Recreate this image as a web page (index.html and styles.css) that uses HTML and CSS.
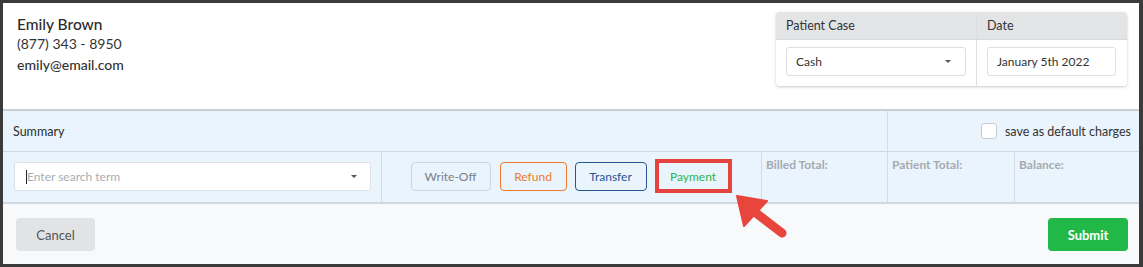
FILE: index.html
```html
<!DOCTYPE html>
<html>
<head>
<meta charset="utf-8">
<link rel="stylesheet" href="styles.css">
</head>
<body>
<div class="frame">
  <div class="top">
    <div class="contact">
      <div class="name">Emily Brown</div>
      <div class="phone">(877) 343 - 8950</div>
      <div class="email">emily@email.com</div>
    </div>
    <div class="case-card">
      <div class="case-head">
        <div class="cc-col1">Patient Case</div>
        <div class="cc-col2">Date</div>
      </div>
      <div class="case-body">
        <div class="cc-col1"><div class="select">Cash<span class="caret"></span></div></div>
        <div class="cc-col2"><div class="date-input">January 5th 2022</div></div>
      </div>
    </div>
  </div>
  <div class="sum-head">
    <div class="sum-title">Summary</div>
    <div class="sum-opt"><span class="checkbox"></span><span>save as default charges</span></div>
  </div>
  <div class="sum-row">
    <div class="cell search-cell">
      <div class="search"><span class="cursor"></span><span class="ph">Enter search term</span><span class="caret"></span></div>
    </div>
    <div class="cell btn-cell">
      <span class="btn btn-write">Write-Off</span>
      <span class="btn btn-refund">Refund</span>
      <span class="btn btn-transfer">Transfer</span>
      <span class="btn btn-pay">Payment</span>
    </div>
    <div class="cell total t1">Billed Total:</div>
    <div class="cell total t2">Patient Total:</div>
    <div class="cell total t3">Balance:</div>
  </div>
  <div class="footer">
    <span class="fbtn cancel">Cancel</span>
    <span class="fbtn submit">Submit</span>
  </div>
  <svg class="arrow" width="1143" height="267" viewBox="0 0 1143 267">
    <line x1="782" y1="233" x2="752" y2="210" stroke="#e8453d" stroke-width="9" stroke-linecap="round"/>
    <polygon points="737,196 767,201 744,226" fill="#e8453d" stroke="#e8453d" stroke-width="2" stroke-linejoin="round"/>
  </svg>
</div>
</body>
</html>
```
FILE: styles.css
```css
* { box-sizing: border-box; }
body { margin: 0; font-family: Lato, "Open Sans", sans-serif; color: #333; }
.frame {
  position: relative;
  width: 1143px; height: 267px;
  border: 3px solid #3b3b3b; border-right-width: 4px;
  background: #fff;
  display: flex; flex-direction: column;
}
.top {
  height: 108px;
  display: flex; justify-content: space-between;
  border-bottom: 2px solid #c9ced6;
  background: #fff;
}
.contact { padding: 11px 0 0 14px; }
.name { font-size: 15.5px; line-height: 20px; color: #2b2b2b; font-weight: 500; }
.phone { font-size: 14px; line-height: 20px; color: #333; }
.email { font-size: 14px; line-height: 21px; color: #333; font-weight: 500; }
.case-card {
  margin: 9px 12px 0 0;
  width: 351px; height: 74px;
  border-radius: 4px;
  box-shadow: 0 1px 3px rgba(0,0,0,0.22);
  overflow: hidden;
  align-self: flex-start;
}
.case-head { display: flex; height: 28px; background: #e3e4e6; border-bottom: 1px solid #d6d8db; font-size: 12.5px; color: #333; }
.case-head > div { padding: 6px 0 0 10px; }
.cc-col1 { width: 201px; border-right: 1px solid #dcdfe3; }
.cc-col2 { flex: 1; }
.case-body { display: flex; height: 46px; background: #fff; }
.case-body > div { padding: 7px 10px 0 10px; }
.case-body .cc-col2 { padding-right: 11px; }
.select, .date-input {
  height: 29px; border: 1px solid #dcdfe3; border-radius: 3px;
  font-size: 12px; color: #333; padding: 6px 0 0 9px;
  display: flex; align-items: flex-start;
}
.select { justify-content: space-between; padding-right: 14px; }
.caret { width: 0; height: 0; border-left: 3px solid transparent; border-right: 3px solid transparent; border-top: 3px solid #555; margin-top: 6px; }
.sum-head {
  height: 41px; display: flex; background: #eaf4fd;
  border-bottom: 1px solid #cfd7e1;
}
.sum-title { width: 885px; border-right: 1px solid #d3dbe5; font-size: 12.5px; color: #2b2b2b; padding: 13px 0 0 10px; }
.sum-opt { flex: 1; display: flex; align-items: center; justify-content: flex-end; padding-right: 8px; font-size: 12.5px; color: #333; gap: 8px; }
.checkbox { width: 16px; height: 16px; background: #fff; border: 1px solid #c5cbd3; border-radius: 3px; }
.sum-row {
  height: 52px; display: flex; background: #eaf4fd;
  border-bottom: 2px solid #d1d8e1;
}
.cell { border-right: 1px solid #d3dbe5; }
.search-cell { width: 379px; padding: 10px 10px 0 11px; }
.search {
  height: 29px; background: #fff; border: 1px solid #dde2e8; border-radius: 3px;
  display: flex; align-items: flex-start; padding: 6px 13px 0 11px; font-size: 12px;
}
.cursor { width: 1px; height: 14px; background: #222; margin-top: 1px; }
.ph { color: #a8adb3; flex: 1; }
.btn-cell { width: 380px; display: flex; justify-content: center; gap: 8px; padding-top: 10px; padding-right: 1px; }
.btn {
  height: 29px; border: 1px solid; border-radius: 4px; font-size: 12px;
  display: flex; align-items: center; justify-content: center; background: transparent;
}
.btn-write { width: 80px; border-color: #cfd5dc; color: #7a8088; margin-right: 1px; }
.btn-refund { width: 67px; border-color: #ef7b2a; color: #ef7b2a; }
.btn-transfer { width: 72px; border-color: #275695; color: #275695; }
.btn-pay { width: 77px; border-color: transparent; color: #30b24d; position: relative; }
.btn-pay::after {
  content: ""; position: absolute; top: -4px; bottom: -3px; left: -1px; right: -1px;
  border: 4px solid #e5433d;
}
.total { font-size: 12px; font-weight: 700; color: #a5aab0; padding: 5px 0 0 4px; }
.t1 { width: 126px; }
.t2 { width: 127px; }
.t3 { flex: 1; border-right: none; }
.footer {
  flex: 1; background: #f8f9fb;
  display: flex; justify-content: space-between; align-items: flex-start;
  padding: 14px 11px 0 13px;
}
.fbtn { height: 33px; border-radius: 4px; display: flex; align-items: center; justify-content: center; font-size: 13px; }
.cancel { width: 79px; background: #e2e3e5; color: #555; }
.submit { width: 80px; background: #21b847; color: #fff; font-weight: 700; }
.arrow { position: absolute; left: -3px; top: -3px; pointer-events: none; }
```
